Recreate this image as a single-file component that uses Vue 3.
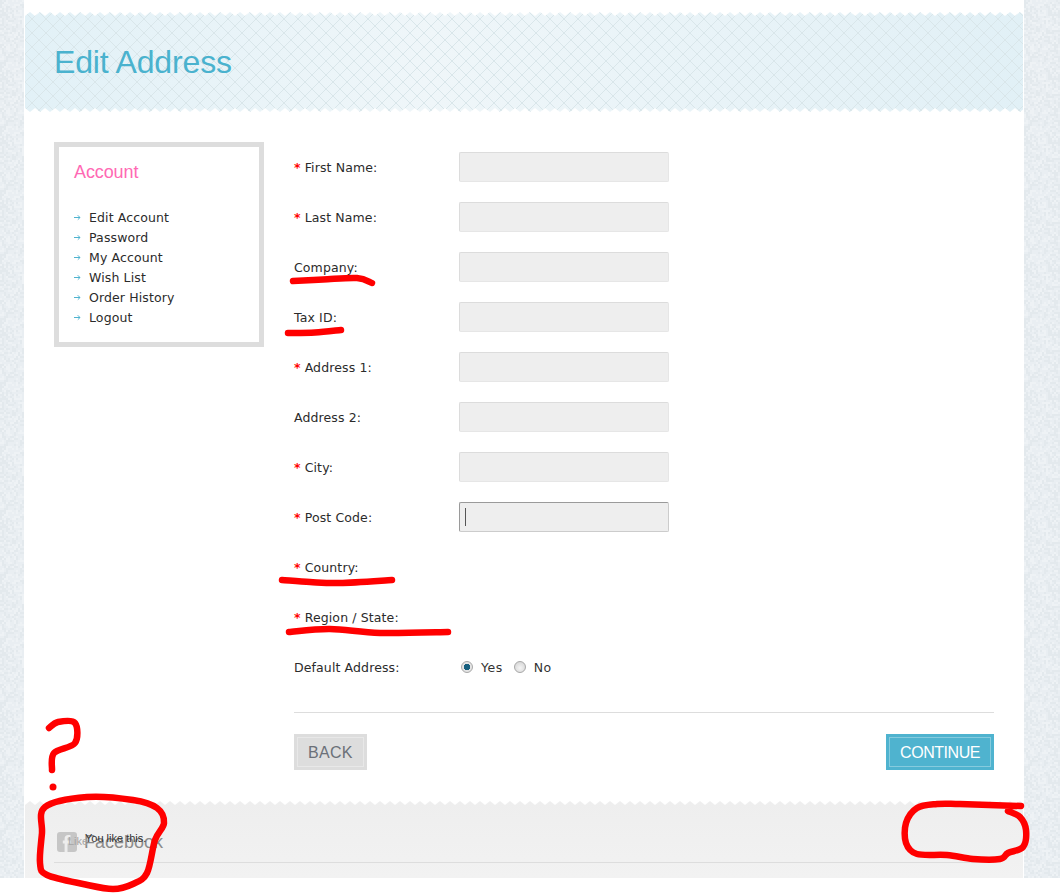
<script setup>
const fields = [
  { label: 'First Name:', req: true, input: true },
  { label: 'Last Name:', req: true, input: true },
  { label: 'Company:', input: true },
  { label: 'Tax ID:', input: true },
  { label: 'Address 1:', req: true, input: true },
  { label: 'Address 2:', input: true },
  { label: 'City:', req: true, input: true },
  { label: 'Post Code:', req: true, input: true, focus: true },
  { label: 'Country:', req: true },
  { label: 'Region / State:', req: true },
]
const links = ['Edit Account', 'Password', 'My Account', 'Wish List', 'Order History', 'Logout']

function seeded(s) {
  return () => {
    s = (s * 16807) % 2147483647
    return s / 2147483647
  }
}
const rnd = seeded(4242)
let tile = ''
for (let y = 0; y < 64; y += 2) {
  for (let x = 0; x < 64; x += 2) {
    const r = rnd()
    if (r < 0.35) tile += `<rect x='${x}' y='${y}' width='2' height='2' fill='%23e3e9ed'/>`
    else if (r < 0.6) tile += `<rect x='${x}' y='${y}' width='2' height='2' fill='%23eef2f5'/>`
  }
}
const textureStyle = {
  backgroundImage: `url("data:image/svg+xml,<svg xmlns='http://www.w3.org/2000/svg' width='64' height='64'>${tile}</svg>")`,
}

const W = 998
const P = 10
function teeth(y0, y1) {
  let d = ''
  const n = Math.ceil(W / P)
  for (let i = 0; i <= n; i++) {
    d += ` L${(i * P).toFixed(1)} ${y1} L${((i + 0.5) * P).toFixed(1)} ${y0}`
  }
  return d
}
const bandPath = `M0 4${teeth(0, 4)} L${W} 96${(() => {
  let d = ''
  const n = Math.ceil(W / P)
  for (let i = n; i >= 0; i--) {
    d += ` L${(i * P + P / 2).toFixed(1)} 100 L${(i * P).toFixed(1)} 96`
  }
  return d
})()} Z`
const footPath = `M0 4${teeth(0, 4)} L${W} 77 L0 77 Z`

function smooth(pts, closed) {
  const n = pts.length
  const at = (i) => (closed ? pts[(i + n) % n] : pts[Math.max(0, Math.min(n - 1, i))])
  let d = `M${pts[0][0]} ${pts[0][1]}`
  const last = closed ? n : n - 1
  for (let i = 0; i < last; i++) {
    const p0 = at(i - 1)
    const p1 = at(i)
    const p2 = at(i + 1)
    const p3 = at(i + 2)
    const c1x = p1[0] + (p2[0] - p0[0]) / 6
    const c1y = p1[1] + (p2[1] - p0[1]) / 6
    const c2x = p2[0] - (p3[0] - p1[0]) / 6
    const c2y = p2[1] - (p3[1] - p1[1]) / 6
    d += ` C${c1x.toFixed(1)} ${c1y.toFixed(1)} ${c2x.toFixed(1)} ${c2y.toFixed(1)} ${p2[0]} ${p2[1]}`
  }
  return d + (closed ? ' Z' : '')
}
const strokes = [
  smooth([[293, 281], [323, 279.5], [357, 278], [372, 283]]),
  smooth([[288, 333], [315, 332.5], [341, 330]]),
  smooth([[282, 580], [310, 582], [340, 583], [392, 580]]),
  smooth([[289, 632], [330, 629], [380, 633], [448, 632]]),
  smooth([[49, 728], [58, 722], [75, 723], [75, 743], [54, 753], [52, 770]]),
  smooth([[45, 807], [87, 797], [133, 800], [157, 808], [164, 823], [155, 840], [147, 873], [133, 884], [113, 889], [83, 884], [47, 875], [40, 863], [42, 833]], true),
  smooth([[1021, 806], [960, 804], [937, 804], [917, 808], [906, 823], [906, 843], [917, 854], [947, 855], [973, 859], [1000, 859], [1008, 853], [1023, 847], [1026, 830], [1020, 817], [1008, 811]]),
]
</script>

<template>
  <div class="root">
    <div class="page" :style="textureStyle">
      <div class="sheet">
        <header class="band">
          <svg class="band-art" width="998" height="100" viewBox="0 0 998 100" aria-hidden="true">
            <defs>
              <linearGradient id="bandFill" x1="0" x2="1" y1="0" y2="0">
                <stop offset="0" stop-color="#e2f1f7" />
                <stop offset="0.4" stop-color="#eff6f9" />
                <stop offset="1" stop-color="#e1f0f6" />
              </linearGradient>
              <pattern id="lattice" width="14" height="14" patternUnits="userSpaceOnUse">
                <path d="M0 0L14 14M14 0L0 14" stroke="#d9e6ea" stroke-width="1" fill="none" />
              </pattern>
            </defs>
            <path :d="bandPath" fill="url(#bandFill)" />
            <path :d="bandPath" fill="url(#lattice)" />
          </svg>
          <h1 class="title">Edit Address</h1>
        </header>

        <main class="content">
          <aside class="side">
            <h2 class="side-title">Account</h2>
            <ul class="side-list">
              <li v-for="l in links" :key="l" class="side-item">
                <svg class="arrow" width="7" height="7" viewBox="0 0 7 7" aria-hidden="true">
                  <path d="M0 3.5H6M3.8 1.3L6 3.5L3.8 5.7" fill="none" stroke="#4fb3cf" stroke-width="1" />
                </svg>
                <a class="side-link">{{ l }}</a>
              </li>
            </ul>
          </aside>

          <section class="form">
            <div v-for="f in fields" :key="f.label" class="row">
              <label class="label"><span v-if="f.req" class="req">*</span>{{ f.label }}</label>
              <div v-if="f.input" class="input" :class="{ focused: f.focus }">
                <span v-if="f.focus" class="caret"></span>
              </div>
            </div>
            <div class="row">
              <label class="label">Default Address:</label>
              <div class="radios">
                <span class="radio on"></span><span class="radio-text">Yes</span>
                <span class="radio"></span><span class="radio-text">No</span>
              </div>
            </div>
            <div class="actions">
              <a class="btn back">BACK</a>
              <a class="btn next">CONTINUE</a>
            </div>
          </section>
        </main>

        <footer class="foot">
          <svg class="foot-art" width="998" height="77" viewBox="0 0 998 77" aria-hidden="true">
            <defs>
              <linearGradient id="footFill" x1="0" x2="0" y1="0" y2="1">
                <stop offset="0" stop-color="#eeeeee" />
                <stop offset="1" stop-color="#f2f2f2" />
              </linearGradient>
            </defs>
            <path :d="footPath" fill="url(#footFill)" />
          </svg>
          <div class="fb">
            <svg width="20" height="20" viewBox="0 0 20 20" aria-hidden="true">
              <rect width="20" height="20" rx="3" fill="#c6c6c6" />
              <path d="M10.5 20V11.5H13.5V8.5H10.5V6.8C10.5 6 10.9 5.6 11.7 5.6H13.5V3H11.2C9 3 7.6 4.4 7.6 6.5V8.5H5.8V11.5H7.6V20Z" fill="#ededed" />
            </svg>
            <span class="fb-name">Facebook</span>
            <span class="fb-like">Like</span>
            <span class="fb-you">You like this.</span>
          </div>
          <div class="foot-line"></div>
        </footer>
      </div>
    </div>

    <svg class="ink" width="1060" height="893" viewBox="0 0 1060 893" aria-hidden="true">
      <path v-for="(d, i) in strokes" :key="i" :d="d" fill="none" stroke="#ff0000" stroke-width="6.5" stroke-linecap="round" stroke-linejoin="round" />
      <circle cx="53" cy="787" r="3.5" fill="#ff0000" />
    </svg>
  </div>
</template>

<style scoped>
.root {
  position: relative;
  height: 893px;
  background: #fff;
  overflow: hidden;
}
.page {
  height: 878px;
  background-color: #e9eef2;
}
.sheet {
  margin-left: 24px;
  width: 1000px;
  height: 878px;
  box-sizing: border-box;
  padding: 12px 1px 0;
  background: #fff;
  display: flex;
  flex-direction: column;
}
.band {
  position: relative;
  height: 100px;
  flex: none;
  display: flex;
  align-items: center;
}
.band-art {
  position: absolute;
  left: 0;
  top: 0;
}
.title {
  position: relative;
  margin: 0 0 0 29px;
  font: 400 32px "Liberation Sans", Arial, sans-serif;
  letter-spacing: -0.15px;
  color: #4ab2ce;
}
.content {
  flex: 1;
  display: flex;
  align-items: flex-start;
  padding: 30px 29px 0;
  min-height: 0;
}
.side {
  width: 210px;
  height: 205px;
  flex: none;
  box-sizing: border-box;
  border: 5px solid #dddddd;
  padding: 15px;
  margin-right: 30px;
}
.side-title {
  margin: 0;
  font: 400 18px/21px "Liberation Sans", Arial, sans-serif;
  letter-spacing: -0.1px;
  color: #ff69b4;
}
.side-list {
  list-style: none;
  margin: 24px 0 0;
  padding: 0;
}
.side-item {
  display: flex;
  align-items: center;
  height: 20px;
}
.arrow {
  flex: none;
  margin-right: 8px;
}
.side-link,
.label,
.radio-text {
  font-family: "DejaVu Sans", Verdana, sans-serif;
  font-size: 12.5px;
  letter-spacing: 0.12px;
  color: #2b2b2b;
}
.form {
  width: 700px;
  flex: none;
}
.row {
  height: 50px;
  display: flex;
  align-items: center;
}
.label {
  width: 165px;
  flex: none;
}
.req {
  color: #ff0000;
  font-weight: 700;
  margin-right: 4px;
}
.input {
  position: relative;
  width: 210px;
  height: 30px;
  box-sizing: border-box;
  background: #eeeeee;
  border: 1px solid #e6e6e6;
  border-top-color: #dcdcdc;
  border-left-color: #dcdcdc;
  border-radius: 2px;
}
.input.focused {
  border-color: #cccccc;
  border-top-color: #9a9a9a;
  border-left-color: #9a9a9a;
}
.caret {
  position: absolute;
  left: 5px;
  top: 5px;
  width: 1px;
  height: 18px;
  background: #555;
}
.radios {
  display: flex;
  align-items: center;
  padding-left: 2px;
}
.radio {
  width: 12px;
  height: 12px;
  box-sizing: border-box;
  border-radius: 50%;
  border: 1px solid #a8a8a8;
  background: radial-gradient(circle at 50% 60%, #f4f4f4, #d0d0d0);
  margin-right: 8px;
}
.radio.on {
  background: radial-gradient(circle, #17607f 0 3px, #e4e4e4 3.5px);
}
.radio-text {
  margin-right: 11px;
  letter-spacing: 0.5px;
  color: #333;
}
.actions {
  margin-top: 20px;
  padding-top: 21px;
  border-top: 1px solid #dddddd;
  display: flex;
  justify-content: space-between;
}
.btn {
  height: 36px;
  box-sizing: border-box;
  padding: 1px 14px 0;
  display: flex;
  align-items: center;
  font: 400 16px "Liberation Sans", Arial, sans-serif;
  outline-offset: -4px;
}
.back {
  background: #dddddd;
  color: #6b7078;
  letter-spacing: 0.3px;
  outline: 1px solid #e8e8e8;
}
.next {
  background: #4fb3cf;
  color: #fff;
  letter-spacing: -0.45px;
  outline: 1px solid #86cbde;
}
.foot {
  position: relative;
  margin-top: auto;
  height: 77px;
  flex: none;
}
.foot-art {
  position: absolute;
  left: 0;
  top: 0;
}
.fb {
  position: absolute;
  left: 32px;
  top: 31px;
  display: flex;
  align-items: center;
  height: 20px;
}
.fb-name {
  margin-left: 7px;
  font: 400 18px "Liberation Sans", Arial, sans-serif;
  color: #8b8b8b;
}
.fb-like {
  position: absolute;
  left: 11px;
  top: 3px;
  font: 400 11px "Liberation Sans", Arial, sans-serif;
  color: #a5a5a5;
}
.fb-you {
  position: absolute;
  left: 28px;
  top: 0;
  font: 400 11px "Liberation Sans", Arial, sans-serif;
  color: #333;
  white-space: nowrap;
}
.foot-line {
  position: absolute;
  left: 29px;
  right: 29px;
  top: 61px;
  height: 1px;
  background: #dddddd;
}
.ink {
  position: absolute;
  left: 0;
  top: 0;
  pointer-events: none;
}
</style>
